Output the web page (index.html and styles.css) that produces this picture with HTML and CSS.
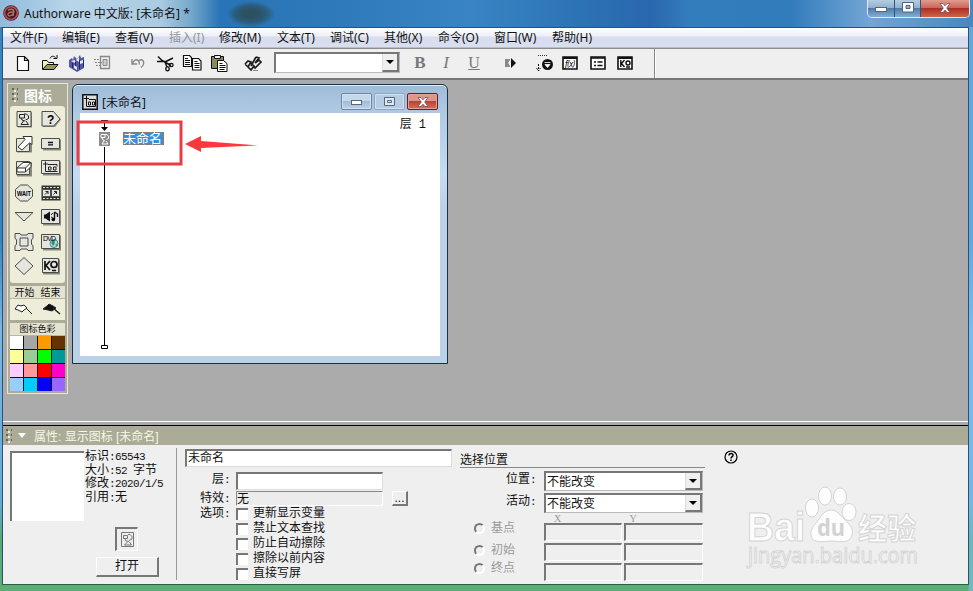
FILE: index.html
```html
<!doctype html>
<html lang="zh-CN">
<head>
	<meta charset="UTF-8">
	<title>Authorware 中文版</title>
	<link rel="stylesheet" href="styles.css">
</head>
<body>
	<div class="frame">
		<div class="titlebar">
			<svg class="logo" width="16" height="16" viewBox="0 0 16 16">
				<circle cx="8" cy="8" r="7.8" fill="#4b2026"/>
				<circle cx="8" cy="8" r="6.300" fill="#29262a" stroke="#c9484e" stroke-width="1.600"/>
				<path d="M5 5.500C7 3.500 11 4 10.800 6.500L10 11M10.500 7.300C7 6.500 4.500 8 5 10C6 12 9.500 10.500 10.500 8" fill="none" stroke="#c96664" stroke-width="1.400"/>
			</svg>
			<span class="caption">Authorware 中文版: [未命名] *</span>
			<div class="winbtns">
				<span class="wb wb-min"><svg width="12" height="8" viewBox="0 0 12 8"><rect x=".5" y="3.500" width="11" height="4" fill="#fff" stroke="#53667e"/></svg></span>
				<span class="wb wb-max"><svg width="12" height="11" viewBox="0 0 12 11"><path d="M.500.500h11v9.500H.500zM4 3.500v3h4v-3z" fill="#fff" fill-rule="evenodd" stroke="#53667e"/></svg></span>
				<span class="wb wb-close"><svg width="12" height="10" viewBox="0 0 12 10"><path d="M1 .500h3l2 2.300L8 .500h3L7.700 5 11 9.500H8L6 7.200 4 9.500H1L4.300 5z" fill="#fff" stroke="#65404a" stroke-width=".7"/></svg></span>
			</div>
		</div>

		<div class="client">
			<div class="menubar">
				<span>文件(F)</span><span>编辑(E)</span><span>查看(V)</span><span class="off">插入(I)</span><span>修改(M)</span><span>文本(T)</span><span>调试(C)</span><span>其他(X)</span><span>命令(O)</span><span>窗口(W)</span><span>帮助(H)</span>
			</div>

			<div class="toolbar">
				<svg class="t1" width="18" height="18" viewBox="0 0 18 18"><path d="M4.500 2.500h7l4 4v10h-11zM11.500 2.500v4h4" fill="#fff" stroke="#111" stroke-width="1.200"/></svg>
				<svg width="18" height="18" viewBox="0 0 18 18"><path d="M1.500 15V6.500H6l1.500 2h5V11" fill="#f3f1c0" stroke="#111"/><path d="M1.500 15.500L6 10.500h11l-4 5z" fill="#96965a" stroke="#111"/><path d="M9 4.500C10 1.500 13.500 1.500 15 4.500M12.500 4.500h3.500V1" fill="none" stroke="#111"/></svg>
				<svg width="18" height="18" viewBox="0 0 18 18"><path d="M1 6l3-2 1 2 1-4 3 3 3-4 1 3 3-1v11l-7 4-8-5z" fill="#5557a3"/><path d="M3 7l4 2V6zM8 6l3 2V3zM6 11l3 2v3l-3-2zM12 7l3-1v3l-3 1z" fill="#e8e8f4"/><path d="M7.500 8v4M11.500 6v9M4.500 9v5M15.500 6v7" stroke="#25275f"/></svg>
				<svg width="18" height="18" viewBox="0 0 18 18"><path d="M6.500 2.500h9v12h-9z" fill="#eee" stroke="#888" stroke-width="1.300"/><path d="M9 5.500h4v6H9z" fill="#ccc" stroke="#888"/><path d="M0 5.500h6M1 8.500h7M2 11.500h5" stroke="#888" stroke-dasharray="2 1"/></svg>
				<svg class="t5" width="18" height="18" viewBox="0 0 18 18"><path d="M3 5v5h5M3.500 9.500C5 6 7 5 9 6.500s1.500 2 1 4M10 6.500c4-3 7 3 2 7" fill="none" stroke="#888" stroke-width="1.400"/></svg>
				<svg width="18" height="18" viewBox="0 0 18 18"><path d="M2 2.500l4 4 9 5M1 7.500h9l7-3.500M9 8l2 5" fill="none" stroke="#111" stroke-width="1.500"/><ellipse cx="15.200" cy="11" rx="1.900" ry="1.600" fill="none" stroke="#111" stroke-width="1.300"/><ellipse cx="11.500" cy="14.800" rx="1.700" ry="2" fill="none" stroke="#111" stroke-width="1.300"/></svg>
				<svg width="20" height="18" viewBox="0 0 20 18"><path d="M1.500 1.500h6l2 2v9h-8zM10.500 4.500h6l2.500 2.500v9h-8.500z" fill="#fff" stroke="#111" stroke-width="1.200"/><path d="M3 4.500h3M3 6.500h5M3 8.500h5M3 10.500h5M12.500 7.500h3M12.500 9.500h5M12.500 11.500h5M12.500 13.500h5" stroke="#111"/></svg>
				<svg width="18" height="18" viewBox="0 0 18 18"><path d="M1.500 2.500h12v12h-12z" fill="#898a58" stroke="#111"/><path d="M4.500 1.500h6v3h-6z" fill="#eee" stroke="#111"/><path d="M7.500 6.500h6l3.500 3v8H7.500z" fill="#fff" stroke="#111"/><path d="M9.500 9.500h3M9.500 11.500h6M9.500 13.500h6M9.500 15.500h5" stroke="#111"/></svg>
				<svg class="t9" width="20" height="18" viewBox="0 0 20 18"><path d="M2 10l3-3 3 1M8 12l5-9M5 7l3 1-3 5-3-3M8 9l3 3-3 4-3-3M13 3l3 1-4 5M12 9l4-3 2 2-6 6-2-2" fill="none" stroke="#1c1c1c" stroke-width="1.700"/><path d="M10 16.500h5" stroke="#888"/></svg>
				<div class="combo font-combo"><i class="drop"></i></div>
				<span class="fmt fmt-b">B</span>
				<span class="fmt fmt-i">I</span>
				<span class="fmt fmt-u">U</span>
				<svg class="t10" width="14" height="12" viewBox="0 0 14 12"><path d="M1 2h5v1L4 6l2 3v1H1z" fill="#888"/><path d="M7 1l5 5-5 5z" fill="#111"/></svg>
				<svg class="t11" width="18" height="18" viewBox="0 0 18 18"><path d="M2 1.500h10" stroke="#333" stroke-dasharray="1 1"/><path d="M2.500 10v7M.500 14l2 3 2-3" fill="none" stroke="#111" stroke-dasharray="2 1"/><circle cx="11.500" cy="10.500" r="5.500" fill="#111"/><path d="M8.500 8.500h6M9 10.500h5l-2.500 3z" stroke="#fff" fill="#fff" stroke-width=".8"/></svg>
				<svg class="boxed" width="17" height="14" viewBox="0 0 17 14"><path d="M1 1h14v12H1z" fill="#fff" stroke="#111" stroke-width="1.600"/><path d="M1 2h14" stroke="#111" stroke-width="2"/><text x="3" y="10.500" font-size="8" font-style="italic" textLength="10">f(x)</text></svg>
				<svg class="boxed" width="17" height="14" viewBox="0 0 17 14"><path d="M1 1h14v12H1z" fill="#fff" stroke="#111" stroke-width="1.600"/><path d="M1 2h14M4 6h2M7.500 6H12.500M4 9.500h2M7.500 9.500H12.500" stroke="#111" stroke-width="1.600"/></svg>
				<svg class="boxed" width="17" height="14" viewBox="0 0 17 14"><path d="M1 1h14v12H1z" fill="#fff" stroke="#111" stroke-width="1.600"/><path d="M1 2h14" stroke="#111" stroke-width="2"/><path d="M3.800 4v7M7.500 4L4.500 7.500l3 3.500M9 11h4" fill="none" stroke="#111" stroke-width="1.400"/><circle cx="11" cy="7" r="2" fill="none" stroke="#111" stroke-width="1.400"/></svg>
				<i class="toolend"></i>
			</div>

			<div class="workspace">
				<div class="palette">
					<div class="palette-title"><i class="grip"></i>图标</div>
					<div class="tools">
						<svg viewBox="0 0 20 18"><path class="sh" d="M4 2.500h14v15H4z"/><path class="bx" d="M3 1.500h14v15H3z"/><path class="ln" d="M5.500 4.500h5v3.500h-5zM10 4h2.500l2 2v2.500l-3 1.500M7 8l1 2 3 1M9.500 11L7 14.500h7.500L12 11"/></svg>
						<svg viewBox="0 0 20 18"><path class="sh" d="M2 3h12l6 6.500-6 7.500H2z"/><path class="bx" d="M1 1.500h11.500L19 9l-6.500 7H1z"/><text x="6" y="13.500" font-size="12" font-weight="bold">?</text></svg>
						<svg viewBox="0 0 20 18"><path class="sh" d="M3 4.500h15v13H3z"/><path class="bx" d="M2.500 3.500h13v13h-13z"/><path class="wh" d="M4 12l7-7.500-2-3h9v8L15.500 8l-7.500 7z"/></svg>
						<svg viewBox="0 0 20 18"><path class="sh" d="M2 4.500h18v11H2z"/><path class="bx" d="M.500 3.500h18v10H.500z"/><path d="M7 7.500h5M7 9.800h5" stroke="#111" stroke-width="1.300"/></svg>
						<svg viewBox="0 0 20 18"><path class="sh" d="M3 3.500h15v14H3z"/><path class="bx" d="M2.500 2.500h13v13h-13z"/><path class="wh" d="M3 9l6-5.500h8v4L11.500 13H3zM3 9h8.500l5-5M11.500 9v4"/></svg>
						<svg viewBox="0 0 20 18"><path class="sh" d="M2 2.500h18v14H2z"/><path class="bx" d="M.500 1.500h18v13H.500z"/><path class="ln" d="M4.500 2.500v5M2 5h5M4.500 7v5.500h12M7 5.500h9v2M7.500 8h2.500v3H7.500zM12.500 8H15v3h-2.500z"/></svg>
						<svg viewBox="0 0 20 18"><path class="bx" d="M6.500 1h7l5 4.500v7l-5 4.500h-7l-5-4.500v-7z"/><text x="3" y="11.500" font-size="7" font-weight="bold" textLength="14" lengthAdjust="spacingAndGlyphs">WAIT</text></svg>
						<svg viewBox="0 0 20 18"><path d="M.500 1.500h19v15H.500z" fill="#34352e"/><path d="M2 3.500h16M2 14.500h16" stroke="#ddd" stroke-dasharray="2 1.500"/><path class="bx" d="M1.500 5.500h8v7h-8zM10.500 5.500h8v7h-8z"/><path class="ln" d="M4 10.500L7 7.500H4.500M7 7.500V10M12.500 10.500l3-3H13M15.500 7.500V10"/></svg>
						<svg viewBox="0 0 20 18"><path class="bx" d="M1 4.500h18L10 13z"/></svg>
						<svg viewBox="0 0 20 18"><path class="sh" d="M2 2.500h18v15H2z"/><path class="bx" d="M.500 1.500h18v14H.500z"/><path d="M3 6.500h1.500L9 3.500v10l-4.500-3H3z" fill="#111"/><path d="M13.500 4v7M13.500 4l3 2v3" fill="none" stroke="#111" stroke-width="1.400"/><circle cx="12.300" cy="11.500" r="1.800"/><path class="ln" d="M10 7l2-2M10 9l2 1"/></svg>
						<svg viewBox="0 0 20 18"><path class="bx" d="M1 .500h5l1 1.500h6l1-1.500h5v5l-1.500 1v5l1.500 1v5h-5l-1-1.500H7l-1 1.500H1v-5l1.500-1v-5L1 5.500z"/><path class="bx" d="M6 5h8v8H6z"/></svg>
						<svg viewBox="0 0 20 18"><path class="sh" d="M2 2.500h18v15H2z"/><path class="bx" d="M.500 1.500h18v14H.500z"/><circle cx="13" cy="10.500" r="4" fill="#a5dce6" stroke="#3a8aa0"/><path d="M10 9l3-2 1 3-2 3zM14 12l3-2-1 3z" fill="#3f8f44"/><text x="2" y="8" font-size="7" textLength="13">DVD</text></svg>
						<svg viewBox="0 0 20 18"><path class="bx" d="M10 .500L19 9l-9 8.500L1 9z"/></svg>
						<svg viewBox="0 0 20 18"><path class="sh" d="M2 2.500h17v15H2z"/><path class="bx" d="M1.500 1.500h16v14h-16z"/><path d="M4 4v9M9 4L5 8.500 9 13M11 13.500h4" fill="none" stroke="#111" stroke-width="1.700"/><circle cx="13" cy="7.500" r="3" fill="none" stroke="#111" stroke-width="1.700"/></svg>
					</div>
					<div class="plabel flags-label"><span>开始</span><span>结束</span></div>
					<div class="flags">
						<svg width="19" height="14" viewBox="0 0 19 14"><path d="M1 6l3-4 3 1 3-1 3 3-3 2-2 2-4-2z" fill="#fff" stroke="#222"/><path d="M12 5l6 6" stroke="#222"/></svg>
						<svg width="19" height="14" viewBox="0 0 19 14"><path d="M1 6l4-3 2-2 4 2 3 2-4 3-4-1z" fill="#111" stroke="#222"/><path d="M11 5l7 6" stroke="#222" stroke-width="1.400"/></svg>
					</div>
					<div class="plabel">图标色彩</div>
					<div class="swatches">
						<i class="c1"></i><i class="c2"></i><i class="c3"></i><i class="c4"></i>
						<i class="c5"></i><i class="c6"></i><i class="c7"></i><i class="c8"></i>
						<i class="c9"></i><i class="c10"></i><i class="c11"></i><i class="c12"></i>
						<i class="c13"></i><i class="c14"></i><i class="c15"></i><i class="c16"></i>
					</div>
				</div>

				<div class="design">
					<div class="design-title">
						<svg width="16" height="16" viewBox="0 0 16 16"><path d="M.800.800h14.400v14.400H.800z" fill="#ddd" stroke="#111" stroke-width="1.500"/><path d="M4.500 2v5M2 4.500h5M4.500 7v5.500h9V5.500H7" fill="none" stroke="#111"/><path d="M6.500 8h2v3h-2zM10.500 8h2v3h-2z" fill="#fff" stroke="#111"/></svg>
						<span>[未命名]</span>
						<b class="db"><svg width="12" height="6" viewBox="0 0 12 6"><rect x=".5" y="1.500" width="10" height="4" fill="#fff" stroke="#58687b"/></svg></b>
						<b class="db db-max"><svg width="11" height="9" viewBox="0 0 11 9"><path d="M.500.500h10v8H.500zM3.500 3.500h4v2h-4z" fill="#dce8f5" stroke="#58687b"/></svg></b>
						<b class="db db-close"><svg width="12" height="10" viewBox="0 0 12 10"><path d="M1 .500h3l2 2.300L8 .500h3L7.700 5 11 9.500H8L6 7.200 4 9.500H1L4.300 5z" fill="#fff" stroke="#65404a" stroke-width=".7"/></svg></b>
					</div>
					<div class="canvas">
						<svg class="flow" width="60" height="243" viewBox="0 0 60 243">
							<path d="M21 7.500h7M24.500 7v9" stroke="#000"/><path d="M21 14h7l-3.500 4z"/>
							<path d="M24.500 34v198" stroke="#000"/>
							<path d="M21.500 232.500h6v3h-6z" fill="#fff" stroke="#000"/>
							<path d="M19 19h11v14H19z" fill="#8b8b8b"/><path d="M21 21.500h4v3h-4zM25 21.500h2l1.500 2v2l-2 1M22 25l1 2 2 1M24 28l-2 3h6l-2-3" fill="none" stroke="#fff"/>
						</svg>
						<span class="nodename">未命名</span>
						<span class="level">层 <em>1</em></span>
						<svg class="mark" width="190" height="50" viewBox="0 0 190 50"><rect x="2" y="2" width="103" height="42" fill="none" stroke="#e83e43" stroke-width="3"/><path d="M109 24L125 16v5l57 4.500-57 2.500v4z" fill="#fb393c"/></svg>
					</div>
				</div>
			</div>

			<div class="props">
				<div class="props-title"><i class="grip"></i><i class="tri"></i>属性: 显示图标 [未命名]</div>
				<div class="props-body">
					<div class="summary">
						<div class="sumrow">
							<div class="preview"></div>
							<div class="info">
								<div>标识<em>:65543</em></div>
								<div>大小<em>:52 </em>字节</div>
								<div>修改<em>:2020/1/5</em></div>
								<div>引用<em>:</em>无</div>
							</div>
						</div>
						<div class="iconwell"><svg width="15" height="17" viewBox="0 0 15 17"><path d="M1.500 1.500h12v14h-12z" fill="#eee" stroke="#777"/><path d="M3.500 4.500h4v3h-4zM8 3.500h2l2 2V8L9 9.500M5 8l1 2 3 .5M7.500 11l-3 3h7l-2-3" fill="none" stroke="#777"/></svg></div>
						<div class="openbtn">打开</div>
					</div>
					<div class="general">
						<div class="field name">未命名</div>
						<div class="row r-level"><label>层<em>:</em></label><div class="field"></div></div>
						<div class="row r-fx"><label>特效<em>:</em></label><div class="field flat">无</div><div class="more">...</div></div>
						<div class="row r-opt">
							<label>选项<em>:</em></label>
							<div class="checks">
								<div><i></i>更新显示变量</div>
								<div><i></i>禁止文本查找</div>
								<div><i></i>防止自动擦除</div>
								<div><i></i>擦除以前内容</div>
								<div><i></i>直接写屏</div>
							</div>
						</div>
					</div>
					<div class="position">
						<div class="heading">选择位置</div>
						<div class="row"><label>位置<em>:</em></label><div class="combo">不能改变<i class="drop"></i></div></div>
						<div class="row"><label>活动<em>:</em></label><div class="combo">不能改变<i class="drop"></i></div></div>
						<div class="xy"><span>X</span><span>Y</span></div>
						<div class="coord"><i class="radio"></i><span>基点</span><b></b><b></b></div>
						<div class="coord low"><i class="radio"></i><span>初始</span><b></b><b></b></div>
						<div class="coord"><i class="radio"></i><span>终点</span><b></b><b></b></div>
					</div>
					<svg class="help" width="14" height="14" viewBox="0 0 14 14"><circle cx="7" cy="7" r="6" fill="none" stroke="#000" stroke-width="1.200"/><path d="M5 5.500c0-3 4.500-2.500 4 0-.3 1.200-2 1.300-2 3M7 9.500v1.600" fill="none" stroke="#000" stroke-width="1.500"/></svg>
				</div>
			</div>
		</div>

		<svg class="watermark" width="190" height="98" viewBox="0 0 190 98">
			<g fill="#fdfdfd" stroke="#d4d4d4" stroke-width="1">
				<ellipse cx="70" cy="23" rx="6.500" ry="9"/><ellipse cx="83" cy="11" rx="6.500" ry="9"/><ellipse cx="98" cy="11.500" rx="6.500" ry="8.500"/><ellipse cx="107" cy="27" rx="7" ry="8.500"/>
				<path d="M89 25c6 0 9 5 13 9 5 5 10 9 8 16-2 8-9 7-21 6-12 1-19 2-20-6-1-7 5-11 8-16 3-4 6-9 12-9z"/>
				<text class="wm-b" x="5" y="56" textLength="58" lengthAdjust="spacingAndGlyphs">Bai</text>
				<text class="wm-c" x="116" y="54" textLength="58" lengthAdjust="spacingAndGlyphs">经验</text>
				<text class="wm-u" x="6" y="78" textLength="170" lengthAdjust="spacingAndGlyphs">jingyan.baidu.com</text>
			</g>
			<text class="wm-d" x="75" y="51" textLength="28" lengthAdjust="spacingAndGlyphs">du</text>
		</svg>
	</div>
</body>
</html>
```
FILE: styles.css
```css
*{
	box-sizing: border-box;
}
body{
	margin: 0;
	font: 12px "Noto Sans", "Noto Sans CJK SC", sans-serif;
	color: #111;
	overflow: hidden;
}
i, em{
	font-style: normal;
}
svg{
	flex: none;
	display: block;
}
.frame{
	position: relative;
	width: 973px;
	height: 591px;
	padding: 0 4px 6px 2px;
	background: linear-gradient(90deg, transparent 3px, transparent 968px, rgba(130,190,235,.6) 969px),
		linear-gradient(#3685c2 0, #3685c2 240px, #78b7e4 330px, #69a9d5 500px, #59a873 540px, #5dae76);
}

/* 标题栏 */
.titlebar{
	display: flex;
	height: 27px;
	margin: 0 -4px 0 -2px;
	padding-left: 3px;
	background:
		radial-gradient(ellipse 24px 13px at 251px 14px, #2c5160 30%, rgba(42,78,90,.65) 65%, transparent),
		linear-gradient(90deg, #91bbdc 0, #b9d5e9 70px, #aacbe2 160px, #78a9cb 190px, #2874b6 220px, #2e79b9 330px, #3984c4 470px, #2c73b5 580px, #2a67ae 650px, #347dbd 690px, #327cbc 790px, #73a5d5 870px, #4788bc 973px);
}
.logo{
	margin: 5px 5px 0 0;
}
.caption{
	margin-top: 5px;
	line-height: 17px;
}
.winbtns{
	display: flex;
	width: 103px;
	height: 18px;
	margin-left: auto;
	margin-right: 3px;
	border: 1px solid #dcecf7;
	border-top: 0;
	border-radius: 0 0 5px 5px;
	overflow: hidden;
}
.wb{
	display: flex;
	align-items: center;
	justify-content: center;
	width: 27px;
	border-right: 1px solid #315577;
	background: linear-gradient(#b6cde0 0, #91b1cf 45%, #527ca7 50%, #80afd5);
}
.wb svg{
	margin-top: -2px;
}
.wb-close{
	width: 48px;
	border-right: 0;
	background: linear-gradient(#df9d8e 0, #c9675b 45%, #ad2f26 50%, #ce6546);
}

.client{
	height: 558px;
	border: 1px solid #25547a;
	border-bottom-color: #246044;
	background: #efefef;
}
.menubar{
	display: flex;
	height: 20px;
	padding-left: 7px;
	line-height: 20px;
	white-space: nowrap;
	background: linear-gradient(#fff, #eef0f8 40%, #d7dcee 50%, #dadff0);
	border-bottom: 1px solid #b9bdca;
}
.menubar span{
	width: 54px;
}
.menubar span:nth-child(1){ width: 52px; }
.menubar span:nth-child(2), .menubar span:nth-child(6){ width: 53px; }
.menubar span:nth-child(4){ width: 50px; }
.menubar span:nth-child(5), .menubar span:nth-child(10){ width: 58px; }
.menubar span:nth-child(9){ width: 56px; }
.menubar .off{
	color: #92949d;
}

.toolbar{
	display: flex;
	align-items: center;
	height: 32px;
	padding: 0 0 2px 10px;
	background: #efefef;
	border-top: 1px solid #8c8c8c;
	border-bottom: 2px solid #777;
}
.toolbar svg{ margin-right: 9px; }
.toolbar svg.t1{ margin-right: 10px; }
.toolbar svg:nth-child(3){ margin-right: 8px; }
.toolbar svg:nth-child(4){ margin-right: 17px; }
.toolbar svg:nth-child(6){ margin-right: 8px; }
.toolbar svg:nth-child(7){ margin-right: 8px; }
.toolbar svg:nth-child(8){ margin-right: 15px; }
.toolbar svg.t9{ margin-right: 11px; }
.toolbar svg.t10{ margin: 0 18px 0 20px; }
.toolbar svg.t11{ margin-right: 8px; }
.toolbar svg.boxed{ margin-right: 10.5px; }
.combo{
	display: flex;
	flex: none;
	padding-left: 3px;
	background: #fff;
	border: 1px solid #bbb;
	border-top: 2px solid #777;
	border-left: 2px solid #777;
	white-space: nowrap;
}
.font-combo{
	width: 126px;
	height: 21px;
}
.drop{
	display: flex;
	align-items: center;
	justify-content: center;
	width: 17px;
	margin-left: auto;
	background: #efefef;
	border-right: 2px solid #777;
	border-bottom: 2px solid #777;
	border-left: 1px solid #ddd;
}
.drop::after{
	content: "";
	border: 4px solid transparent;
	border-top-color: #000;
	border-bottom: 0;
}
.fmt{
	width: 20px;
	text-align: center;
	font: 17px/18px "Liberation Serif", serif;
	color: #777;
}
.fmt-b{ margin-left: 10px; font-weight: bold; }
.fmt-i{ margin-left: 6px; font-style: italic; }
.fmt-u{ margin-left: 8px; text-decoration: underline; font-size: 16px; }
.toolend{
	align-self: stretch;
	width: 2px;
	margin: 0 0 -2px 9px;
	border-left: 1px solid #888;
	border-right: 1px solid #fff;
}

.workspace{
	position: relative;
	height: 341px;
	padding: 3px 0 0 4px;
	background: #ababab;
}
.palette{
	width: 61px;
	height: 311px;
	padding: 0 2px 2px;
	background: #abab97;
	border: 1px solid #e6e6d2;
}
.palette-title{
	display: flex;
	align-items: center;
	height: 22px;
	color: #fff;
	font-size: 14px;
	font-weight: bold;
}
.grip{
	width: 6px;
	height: 14px;
	margin: 0 6px 0 2px;
	background: radial-gradient(circle at 1px 1px, #666655 1px, transparent 1.5px) 0 0/5px 5px,
		radial-gradient(circle at 2px 2px, #eee 1px, transparent 1.5px) 1px 1px/5px 5px;
}
.tools{
	display: grid;
	grid-template-columns: 27px 27px;
	grid-auto-rows: 24.5px;
	align-items: center;
	justify-items: center;
	height: 177px;
	padding-top: 1px;
	background: #ededd9;
	border-radius: 3px;
}
.tools svg{
	width: 20px;
	height: 18px;
}
.tools text{
	font-family: "Liberation Sans", sans-serif;
}
.sh{ fill: #888a7e; }
.bx{ fill: #e5e6df; stroke: #4c4d48; }
.wh{ fill: #fff; stroke: #333; }
.ln{ fill: none; stroke: #222; }
.plabel{
	display: flex;
	justify-content: center;
	height: 13px;
	margin-top: 3px;
	line-height: 12px;
	font-size: 9px;
	background: #e3e3cf;
	border-bottom: 1px solid #b7b7a2;
	white-space: nowrap;
}
.flags-label{
	gap: 6px;
	font-size: 10px;
}
.flags{
	display: flex;
	align-items: center;
	justify-content: space-around;
	height: 21px;
	background: #ededd9;
}
.swatches{
	display: grid;
	grid-template-columns: repeat(4, 13px);
	grid-auto-rows: 13px;
	gap: 1px;
	background: #111;
}
.c1{ background: #fff; }
.c2{ background: #a6a6a6; }
.c3{ background: #ff9900; }
.c4{ background: #663300; }
.c5{ background: #ffff99; }
.c6{ background: #99cc99; }
.c7{ background: #00ff00; }
.c8{ background: #009999; }
.c9{ background: #ffccff; }
.c10{ background: #ff9999; }
.c11{ background: #ff0000; }
.c12{ background: #ff00cc; }
.c13{ background: #99ccff; }
.c14{ background: #00ccff; }
.c15{ background: #0000ff; }
.c16{ background: #9966ff; }

/* 设计窗口 */
.design{
	position: absolute;
	left: 69px;
	top: 4px;
	width: 376px;
	height: 280px;
	padding: 0 7px 6px;
	background: linear-gradient(#9fbbd6, #b0cae4 28px, #c5dcf2 90px, #bbd1e8 120px);
	border: 1px solid #183241;
	border-radius: 6px 6px 0 0;
	box-shadow: inset 0 1px #e4eff9;
}
.design-title{
	display: flex;
	align-items: center;
	height: 28px;
	padding-top: 5px;
	padding-left: 2px;
}
.design-title span{
	margin-left: 4px;
	margin-right: auto;
}
.db{
	display: flex;
	align-items: center;
	justify-content: center;
	width: 31px;
	height: 17px;
	margin-right: 2px;
	border: 1px solid #6c87a5;
	border-radius: 2px;
	box-shadow: inset 0 0 0 1px #d2e2f0;
	background: linear-gradient(#c5d8eb 50%, #a3bdd8 50%, #b9d1e9);
}
.db-max{
	border-color: #8ca7c3;
	background: #b5cce4;
}
.db-close{
	border-color: #5c2029;
	box-shadow: inset 0 0 0 1px #e2a394;
	background: linear-gradient(#dd9689 48%, #bb4238 50%, #d57156);
}
.canvas{
	position: relative;
	height: 243px;
	background: #fff;
}
.nodename{
	position: absolute;
	left: 43px;
	top: 19px;
	width: 41px;
	height: 13px;
	line-height: 12px;
	font-size: 13px;
	color: #fff;
	background: #3290e4;
	outline: 1px dotted #c56b1b;
	outline-offset: -1px;
}
.level{
	position: absolute;
	right: 14px;
	top: 2px;
	line-height: 17px;
}
.level em{
	margin-left: 4px;
	font: 12px "Liberation Mono", monospace;
}
.flow{
	position: absolute;
	left: 0;
	top: 0;
}
.mark{
	position: absolute;
	left: -4px;
	top: 7px;
}

/* 属性面板 */
.props{
	height: 163px;
	border-top: 1px solid #fff;
	font-family: "Liberation Sans", "Noto Sans CJK SC", sans-serif;
}
.props-title{
	display: flex;
	align-items: center;
	height: 23px;
	padding-top: 1px;
	border-top: 3px solid #aaa;
	box-shadow: inset 0 1px #000;
	background: #abab97;
	color: #f8f8e5;
}
.props-title .grip{
	margin: 0 6px 0 3px;
}
.tri{
	margin-right: 8px;
	border: 4px solid transparent;
	border-top: 5px solid #fff;
	border-bottom: 0;
}
.props-body{
	display: flex;
	height: 139px;
	line-height: 15px;
}
.props em{
	font: 11px/11px "Liberation Mono", monospace;
	letter-spacing: -.6px;
	white-space: pre;
}
.summary{
	width: 174px;
	height: 132px;
	margin-top: 3px;
	padding: 3px 0 0 7px;
	border-right: 1px solid #999;
}
.sumrow{
	display: flex;
	height: 76px;
}
.preview{
	width: 74px;
	height: 70px;
	background: #fff;
	border-top: 2px solid #777;
	border-left: 2px solid #777;
}
.info{
	margin-left: 1px;
	line-height: 13.6px;
	margin-top: -1px;
	white-space: nowrap;
}
.info div{
	height: 13.6px;
}
.iconwell{
	display: flex;
	align-items: center;
	justify-content: center;
	width: 23px;
	height: 24px;
	margin-left: 105px;
	border: 1px solid #fff;
	border-top: 2px solid #777;
	border-left: 2px solid #777;
}
.openbtn{
	width: 63px;
	height: 20px;
	margin: 6px 0 0 86px;
	line-height: 17px;
	text-align: center;
	border: 1px solid #fff;
	border-right: 2px solid #777;
	border-bottom: 2px solid #777;
}
.general{
	width: 267px;
	margin: 4px 0 0 8px;
}
.field{
	height: 18px;
	background: #fff;
	border: 1px solid #ddd;
	border-top: 2px solid #777;
	border-left: 2px solid #777;
}
.name{
	padding-left: 1px;
}
.row{
	display: flex;
}
.row label{
	flex: none;
	text-align: right;
}
.general .row label{
	width: 45px;
	margin-right: 6px;
}
.general .row .field{
	width: 147px;
}
.r-level{
	height: 19px;
	margin-top: 5px;
}
.r-fx{
	height: 15px;
}
.general .row .flat{
	height: 15px;
	line-height: 14px;
	background: #ececec;
	border: 1px solid #fff;
	border-top-color: #888;
	border-left-color: #888;
}
.more{
	width: 16px;
	height: 15px;
	margin-left: 9px;
	text-align: center;
	line-height: 12px;
	border: 1px solid #fff;
	border-right: 2px solid #777;
	border-bottom: 2px solid #777;
}
.checks div{
	display: flex;
	align-items: center;
	height: 15px;
}
.checks i{
	width: 12px;
	height: 12px;
	margin-right: 5px;
	background: #fff;
	border-top: 2px solid #777;
	border-left: 2px solid #777;
}
.position{
	width: 245px;
	margin: 7px 0 0 8px;
}
.heading{
	height: 16px;
	margin-bottom: 3px;
	line-height: 17px;
	border-bottom: 1px solid #888;
}
.position .row{
	height: 22px;
}
.position label{
	width: 76px;
	margin-right: 8px;
	line-height: 17px;
}
.position .combo{
	width: 159px;
	height: 20px;
	line-height: 18px;
	padding-left: 1px;
}
.xy{
	display: flex;
	height: 8px;
	padding-left: 94px;
	color: #999;
	font: 10px/8px "Liberation Serif", serif;
}
.xy span{
	width: 81px;
}
.coord{
	display: flex;
	height: 20px;
	color: #999;
	line-height: 11px;
}
.radio{
	width: 11px;
	height: 11px;
	margin: 0 6px 0 14px;
	border: 2px solid #fff;
	border-top-color: #777;
	border-left-color: #777;
	border-radius: 50%;
}
.low .radio{
	margin-top: 2px;
}
.low span{
	padding-top: 2px;
}
.coord span{
	width: 53px;
}
.coord b{
	width: 79px;
	height: 18px;
	margin-right: 2px;
	border: 1px solid #fff;
	border-top: 2px solid #777;
	border-left: 2px solid #777;
}
.help{
	margin: 5px 0 0 19px;
}
.watermark{
	position: absolute;
	left: 742px;
	top: 485px;
}
.wm-b{ font: bold 40px "Liberation Sans", sans-serif; }
.wm-c{ font: bold 30px "Noto Sans CJK SC", sans-serif; }
.wm-u{ font: 21px "Open Sans", sans-serif; }
.wm-d{ font: bold 24px "Noto Sans", sans-serif; fill: #d2d2d2; }
```
